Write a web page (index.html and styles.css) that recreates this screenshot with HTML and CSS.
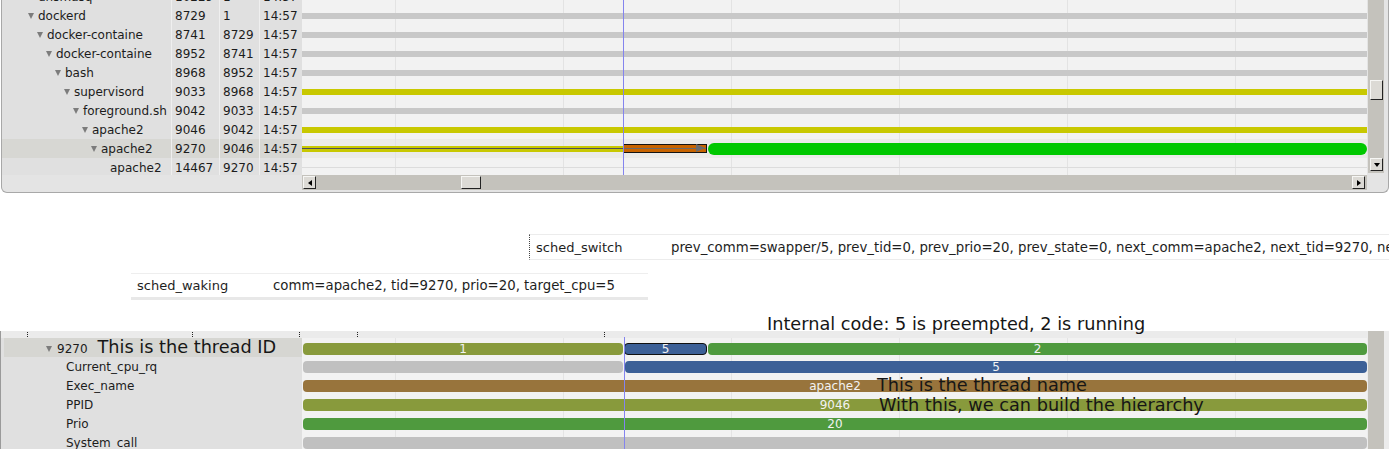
FILE: index.html
```html
<!DOCTYPE html>
<html>
<head>
<meta charset="utf-8">
<link rel="stylesheet" href="styles.css">
</head>
<body>
<div class="top-panel">
  <div class="tp-body">
    <div class="tp-view">
      <div class="tp-rows">
        <div class="trow">
          <div class="c name l0"><span class="tri hidden"></span>dnsmasq</div>
          <div class="c num">10229</div><div class="c num">1</div><div class="c num">14:57</div>
          <div class="tl"><div class="tbar gray"></div></div>
        </div>
        <div class="trow">
          <div class="c name l0"><span class="tri"></span>dockerd</div>
          <div class="c num">8729</div><div class="c num">1</div><div class="c num">14:57</div>
          <div class="tl"><div class="tbar gray"></div></div>
        </div>
        <div class="trow">
          <div class="c name l1"><span class="tri"></span>docker-containe</div>
          <div class="c num">8741</div><div class="c num">8729</div><div class="c num">14:57</div>
          <div class="tl"><div class="tbar gray"></div></div>
        </div>
        <div class="trow">
          <div class="c name l2"><span class="tri"></span>docker-containe</div>
          <div class="c num">8952</div><div class="c num">8741</div><div class="c num">14:57</div>
          <div class="tl"><div class="tbar gray"></div></div>
        </div>
        <div class="trow">
          <div class="c name l3"><span class="tri"></span>bash</div>
          <div class="c num">8968</div><div class="c num">8952</div><div class="c num">14:57</div>
          <div class="tl"><div class="tbar gray"></div></div>
        </div>
        <div class="trow">
          <div class="c name l4"><span class="tri"></span>supervisord</div>
          <div class="c num">9033</div><div class="c num">8968</div><div class="c num">14:57</div>
          <div class="tl"><div class="tbar yellow"></div></div>
        </div>
        <div class="trow">
          <div class="c name l5"><span class="tri"></span>foreground.sh</div>
          <div class="c num">9042</div><div class="c num">9033</div><div class="c num">14:57</div>
          <div class="tl"><div class="tbar gray"></div></div>
        </div>
        <div class="trow">
          <div class="c name l6"><span class="tri"></span>apache2</div>
          <div class="c num">9046</div><div class="c num">9042</div><div class="c num">14:57</div>
          <div class="tl"><div class="tbar yellow"></div></div>
        </div>
        <div class="trow sel">
          <div class="c name l7"><span class="tri"></span>apache2</div>
          <div class="c num">9270</div><div class="c num">9046</div><div class="c num">14:57</div>
          <div class="tl">
            <div class="seg-y"></div>
            <div class="seg-o"><span class="arrow"></span></div>
            <div class="seg-g"></div>
          </div>
        </div>
        <div class="trow">
          <div class="c name l8"><span class="tri hidden"></span>apache2</div>
          <div class="c num">14467</div><div class="c num">9270</div><div class="c num">14:57</div>
          <div class="tl"><div class="tline"></div></div>
        </div>
      </div>
      <div class="cursor top-cursor"></div>
    </div>
    <div class="vscroll">
      <div class="vs-thumb"></div>
      <div class="vs-fill"></div>
      <div class="sbtn"><span class="ar-down"></span></div>
    </div>
  </div>
  <div class="tp-hs">
    <div class="hscroll">
      <div class="sbtn"><span class="ar-left"></span></div>
      <div class="hs-gap"></div>
      <div class="hs-thumb"></div>
      <div class="hs-fill"></div>
      <div class="sbtn"><span class="ar-right"></span></div>
    </div>
  </div>
</div>

<div class="events">
  <div class="ev ev-switch">
    <div class="ev-name sw">sched_switch</div>
    <div class="ev-val">prev_comm=swapper/5, prev_tid=0, prev_prio=20, prev_state=0, next_comm=apache2, next_tid=9270, next_prio=20</div>
  </div>
  <div class="ev ev-waking">
    <div class="ev-name wk">sched_waking</div>
    <div class="ev-val">comm=apache2, tid=9270, prio=20, target_cpu=5</div>
  </div>
  <div class="note note-code">Internal code: 5 is preempted, 2 is running</div>
</div>

<div class="bp">
  <div class="bp-view">
    <div class="bp-head">
      <span class="tick t1"></span><span class="tick t2"></span><span class="tick t3"></span><span class="tick t4"></span><span class="tick t5"></span>
    </div>
    <div class="brow sel">
      <div class="bname parent"><span class="tri"></span>9270<span class="note-inline">This is the thread ID</span></div>
      <div class="btl">
        <div class="bb olive w320">1</div>
        <div class="bb blue boxed">5</div>
        <div class="bb green grow">2</div>
      </div>
    </div>
    <div class="brow">
      <div class="bname child">Current_cpu_rq</div>
      <div class="btl">
        <div class="bb lgray w320"></div>
        <div class="bb blue grow gap2">5</div>
      </div>
    </div>
    <div class="brow">
      <div class="bname child">Exec_name</div>
      <div class="btl"><div class="bb brown grow">apache2</div></div>
    </div>
    <div class="brow">
      <div class="bname child">PPID</div>
      <div class="btl"><div class="bb olive grow">9046</div></div>
    </div>
    <div class="brow">
      <div class="bname child">Prio</div>
      <div class="btl"><div class="bb green grow">20</div></div>
    </div>
    <div class="brow">
      <div class="bname child">System_call</div>
      <div class="btl"><div class="bb lgray grow"></div></div>
    </div>
    <div class="cursor bottom-cursor"></div>
    <div class="note note-name">This is the thread name</div>
    <div class="note note-hier">With this, we can build the hierarchy</div>
  </div>
  <div class="bvs"></div>
</div>
</body>
</html>
```

FILE: styles.css
```css
* { box-sizing: border-box; }
html, body { margin: 0; padding: 0; }
body {
  width: 1389px;
  height: 449px;
  overflow: hidden;
  background: #ffffff;
  font-family: "DejaVu Sans", sans-serif;
  font-size: 12px;
  color: #1c1c1c;
}

/* ---------- top panel ---------- */
.top-panel {
  margin-left: 1px;
  width: 1388px;
  height: 193px;
  background: #e4e4e4;
  border: 1px solid #a8a8a8;
  border-top: none;
  border-radius: 0 0 6px 6px;
  display: flex;
  flex-direction: column;
}
.tp-body { display: flex; height: 175px; }
.tp-view {
  width: 1365px;
  height: 175px;
  overflow: hidden;
  position: relative;
}
.tp-rows { margin-top: -13px; }
.trow {
  display: grid;
  grid-template-columns: 169px 48px 40px 43px 1065px;
  height: 19px;
}
.c {
  background: #e0e0e0;
  line-height: 20px;
  white-space: nowrap;
  overflow: hidden;
}
.num { border-left: 1px solid #efefef; padding-left: 3px; }
.name { padding-left: 26px; }
.l1 { padding-left: 35px; }
.l2 { padding-left: 44px; }
.l3 { padding-left: 53px; }
.l4 { padding-left: 62px; }
.l5 { padding-left: 71px; }
.l6 { padding-left: 80px; }
.l7 { padding-left: 89px; }
.l8 { padding-left: 98px; }
.tri {
  display: inline-block;
  width: 0;
  height: 0;
  border-left: 3px solid transparent;
  border-right: 3px solid transparent;
  border-top: 6px solid #7c7c7c;
  margin-right: 4px;
  vertical-align: 1px;
}
.tri.hidden { visibility: hidden; }
.trow.sel .c { background: #d7d7d3; }

.tl {
  display: flex;
  align-items: center;
  background-color: #f2f2f2;
  background-image: linear-gradient(90deg, #e3e3e3 0, #e3e3e3 1px, transparent 1px);
  background-size: 168px 100%;
  background-position: 93px 0;
}
.trow.sel .tl { background-color: #ebebe9; }
.tbar { width: 100%; height: 6px; }
.tbar.gray { background: #c8c8c8; }
.tbar.yellow { background: #c8c800; }
.tline { width: 100%; height: 1px; background: #dcdcdc; }
.seg-y {
  width: 321px;
  height: 6px;
  background: linear-gradient(#c8c800 0, #c8c800 2px, #4e4e5a 2px, #4e4e5a 3px, #c8c800 3px);
}
.seg-o {
  position: relative;
  width: 84px;
  height: 9px;
  border: 1px solid #141414;
  background: linear-gradient(#c86400 0, #c86400 3px, #6a6a6a 3px, #6a6a6a 4px, #c86400 4px);
}
.seg-o .arrow {
  position: absolute;
  right: 1px;
  top: -1px;
  width: 0;
  height: 0;
  border-top: 4px solid transparent;
  border-bottom: 4px solid transparent;
  border-left: 9px solid #6c6c6c;
}
.seg-g {
  flex: 1;
  height: 12px;
  margin-left: 1px;
  background: #00c800;
  border-radius: 6px;
}
.cursor { position: absolute; width: 1px; background: #8484ee; }
.top-cursor { left: 621px; top: 0; bottom: 0; }

/* scrollbars */
.vscroll {
  width: 16px;
  height: 173px;
  margin-left: 1px;
  background: #c4c2bc;
  display: flex;
  flex-direction: column;
  padding: 80px 0 2px 2px;
}
.vs-thumb {
  width: 13px;
  height: 20px;
  background: #dcdad5;
  border: 1px solid;
  border-color: #f6f6f4 #222 #222 #f6f6f4;
}
.vs-fill { flex: 1; }
.sbtn {
  width: 13px;
  height: 13px;
  background: #dcdad5;
  border: 1px solid;
  border-color: #f6f6f4 #222 #222 #f6f6f4;
  display: flex;
  align-items: center;
  justify-content: center;
  flex: none;
}
.ar-down { width: 0; height: 0; border-left: 3px solid transparent; border-right: 3px solid transparent; border-top: 4px solid #000; }
.ar-left { width: 0; height: 0; border-top: 3px solid transparent; border-bottom: 3px solid transparent; border-right: 4px solid #000; }
.ar-right { width: 0; height: 0; border-top: 3px solid transparent; border-bottom: 3px solid transparent; border-left: 4px solid #000; }
.tp-hs { height: 15px; padding-left: 300px; }
.hscroll {
  width: 1065px;
  height: 15px;
  background: #c4c2bc;
  display: flex;
  align-items: center;
  padding: 0 2px 0 1px;
}
.hs-gap { width: 145px; flex: none; }
.hs-thumb {
  width: 20px;
  height: 13px;
  background: #dcdad5;
  border: 1px solid;
  border-color: #f6f6f4 #222 #222 #f6f6f4;
}
.hs-fill { flex: 1; }

/* ---------- events ---------- */
.events {
  height: 138px;
  position: relative;
  padding-top: 41px;
  font-size: 13.3px;
  color: #1e1e1e;
}
.ev {
  display: flex;
  align-items: center;
  white-space: nowrap;
  overflow: hidden;
}
.ev-switch {
  margin-left: 529px;
  height: 26px;
  border-top: 1px solid #ececec;
  border-bottom: 1px solid #ececec;
  border-left: 1px dotted #444;
}
.ev-waking {
  margin-left: 131px;
  width: 517px;
  margin-top: 13px;
  height: 27px;
  border-top: 1px solid #eeeeee;
  border-bottom: 3px solid #e8e8e8;
}
.ev-name { flex: none; padding-left: 6px; font-size: 13px; }
.ev-name.sw { width: 141px; }
.ev-name.wk { width: 142px; }

.note {
  position: absolute;
  z-index: 5;
  font-size: 17.7px;
  line-height: 20px;
  color: #161616;
  white-space: nowrap;
}
.note-code { left: 767px; top: 121px; }

/* ---------- bottom panel ---------- */
.bp {
  height: 118px;
  border-left: 1px solid #9a9a9a;
  background: #ececec;
  display: flex;
}
.bp-view {
  width: 1366px;
  position: relative;
  overflow: hidden;
  padding-left: 1px;
  background: #e0e0e0;
}
.bp-head {
  position: relative;
  height: 7px;
  margin-left: -1px;
  background: #ebebeb;
}
.tick {
  position: absolute;
  top: 1px;
  width: 1px;
  height: 6px;
  background: repeating-linear-gradient(#222 0, #222 1px, transparent 1px, transparent 2px);
}
.t1 { left: 26px; }
.t2 { left: 191px; }
.t3 { left: 298px; }
.t4 { left: 356px; }
.t5 { left: 603px; }
.brow {
  display: grid;
  grid-template-columns: 300px 1065px;
  height: 19px;
}
.bname {
  line-height: 20px;
  white-space: nowrap;
  background: #e0e0e0;
}
.brow.sel .bname { background: #d6d6d2; margin-left: 2px; padding-left: 42px; }
.bname.child { padding-left: 64px; }
.bname .tri { margin-right: 5px; }
.note-inline {
  font-size: 17.7px;
  line-height: 19px;
  margin-left: 10px;
  color: #161616;
}
.btl {
  display: flex;
  align-items: center;
  background-color: #f2f2f2;
  background-image: linear-gradient(90deg, #e4e4e4 0, #e4e4e4 1px, transparent 1px);
  background-size: 168px 100%;
  background-position: 93px 0;
}
.bb {
  height: 12px;
  margin-left: 1px;
  border-radius: 4px;
  color: #f2f2f2;
  font-size: 12px;
  line-height: 12px;
  text-align: center;
  white-space: nowrap;
  overflow: hidden;
}
.w320 { width: 320px; flex: none; }
.grow { flex: 1; }
.gap2 { margin-left: 2px; }
.boxed { width: 83px; flex: none; border: 1px solid #111; line-height: 10px; }
.olive { background: #889a3c; }
.blue { background: #3c6097; }
.green { background: #4f9a3e; }
.brown { background: #98743c; }
.lgray { background: #c0c0c0; }
.bottom-cursor { left: 623px; top: 6px; bottom: 0; }
.note-name { left: 876px; top: 44px; }
.note-hier { left: 878px; top: 64px; }
.bvs {
  width: 16px;
  margin-left: 1px;
  background: #c4c2bc;
}
```
